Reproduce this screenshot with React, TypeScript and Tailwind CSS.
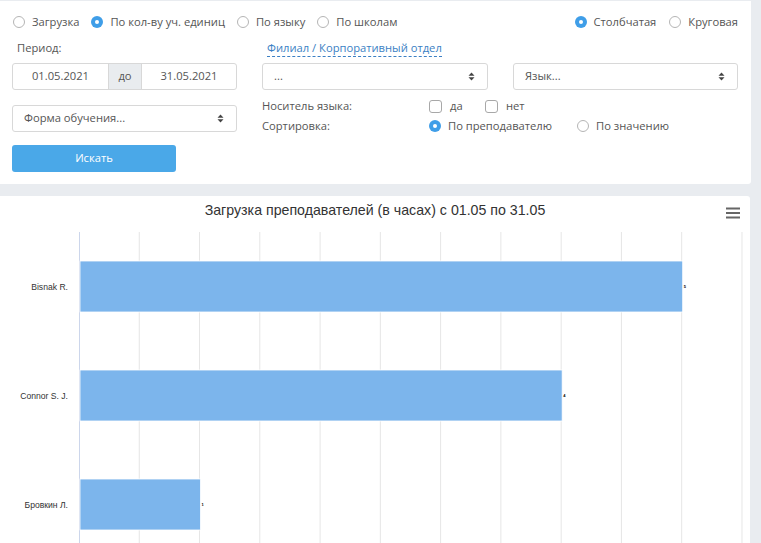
import React from "react";

const Radio = ({ checked, label }: { checked?: boolean; label: string }) => (
  <label className="flex items-center gap-[7px]">
    {checked ? (
      <span className="w-[12px] h-[12px] rounded-full bg-[#3f9ee8] flex items-center justify-center">
        <span className="w-[4px] h-[4px] rounded-full bg-white" />
      </span>
    ) : (
      <span className="w-[12px] h-[12px] rounded-full border border-[#b5b5b5] bg-white" />
    )}
    <span>{label}</span>
  </label>
);

const Check = ({ label }: { label: string }) => (
  <label className="flex items-center gap-[8px]">
    <span className="w-[13px] h-[13px] rounded-[3px] border border-[#a8a8a8] bg-white" />
    <span>{label}</span>
  </label>
);

const Arrows = () => (
  <svg width="7" height="9" viewBox="0 0 7 9">
    <path d="M3.5 0.5 L6.5 3.8 L0.5 3.8 Z" fill="#444" />
    <path d="M3.5 8.5 L6.5 5.2 L0.5 5.2 Z" fill="#444" />
  </svg>
);

const Select = ({ text, cls }: { text: string; cls?: string }) => (
  <div
    className={
      "flex items-center justify-between rounded-[3px] border border-[#d8d8d8] bg-white pl-[11px] pr-[12px] " +
      (cls || "")
    }
  >
    <span>{text}</span>
    <Arrows />
  </div>
);

export default function App() {
  const gridX = Array.from({ length: 12 }, (_, i) => 79 + i * 60.27);
  const unit = 2 * 60.27;
  const data = [
    { name: "Bisnak R.", v: 5 },
    { name: "Connor S. J.", v: 4 },
    { name: "Бровкин Л.", v: 1 },
  ];
  return (
    <div className="w-[761px] h-[543px] overflow-hidden bg-[#e9ecf0] pt-px">
      <div
        className="w-[751px] h-[183px] bg-white rounded-br-[3px] px-[12px] pt-[12px] text-[11.2px] text-[#555]"
        style={{ fontFamily: '"Open Sans", "Liberation Sans", sans-serif' }}
      >
        <div className="flex justify-between h-[18px] items-center pr-[1px]">
          <div className="flex items-center gap-[12px] pl-px">
            <Radio label="Загрузка" />
            <Radio checked label="По кол-ву уч. единиц" />
            <Radio label="По языку" />
            <Radio label="По школам" />
          </div>
          <div className="flex items-center gap-[13px]">
            <Radio checked label="Столбчатая" />
            <Radio label="Круговая" />
          </div>
        </div>
        <div className="grid grid-cols-[225px_226px_225px] gap-x-[25px] mt-[8px]">
          <div className="h-[18px] leading-[18px] pl-[5px]">Период:</div>
          <div className="h-[18px] leading-[18px] pl-[5px]">
            <span className="text-[#3b7fc4] border-b border-dashed border-[#3b7fc4] pb-px">
              Филиал / Корпоративный отдел
            </span>
          </div>
          <div />
          <div className="mt-[6px] h-[27px] flex rounded-[3px] border border-[#d8d8d8] overflow-hidden">
            <div className="w-[95px] flex items-center justify-center">01.05.2021</div>
            <div className="w-[34px] flex items-center justify-center bg-[#e9ecef] border-x border-[#d8d8d8]">
              до
            </div>
            <div className="flex-1 flex items-center justify-center">31.05.2021</div>
          </div>
          <Select text="..." cls="mt-[6px] h-[27px]" />
          <Select text="Язык..." cls="mt-[6px] h-[27px]" />
          <div className="h-[38px] mt-[8px] pt-[7px]">
            <Select text="Форма обучения..." cls="h-[27px]" />
          </div>
          <div className="col-span-2 h-[39px] mt-[7px]">
            <div className="flex items-center h-[19px]">
              <span className="w-[167px]">Носитель языка:</span>
              <div className="w-[56px]">
                <Check label="да" />
              </div>
              <Check label="нет" />
            </div>
            <div className="flex items-center h-[20px]">
              <span className="w-[167px]">Сортировка:</span>
              <div className="w-[148px]">
                <Radio checked label="По преподавателю" />
              </div>
              <Radio label="По значению" />
            </div>
          </div>
        </div>
        <button className="mt-[9px] w-[164px] h-[27px] rounded-[3px] bg-[#4aa8e8] text-white text-[11.2px]">
          Искать
        </button>
      </div>
      <div className="mt-[12px] w-[750px] h-[347px] bg-white rounded-tr-[3px]">
        <svg width="750" height="347" viewBox="0 0 750 347" style={{ fontFamily: '"Liberation Sans", Arial, sans-serif' }}>
          <text x="375" y="18.5" textAnchor="middle" fontSize="14.2" fill="#333">
            Загрузка преподавателей (в часах) с 01.05 по 31.05
          </text>
          <rect x="726" y="11.5" width="14" height="2" fill="#666" />
          <rect x="726" y="16" width="14" height="2" fill="#666" />
          <rect x="726" y="20.5" width="14" height="2" fill="#666" />
          {gridX.slice(1).map((x, i) => (
            <line key={i} x1={x} x2={x} y1={36} y2={347} stroke="#e6e6e6" strokeWidth="1" />
          ))}
          <line x1={79.5} x2={79.5} y1={36} y2={347} stroke="#ccd6eb" strokeWidth="1" />
          {data.map((d, i) => {
            const y = 65 + i * 109;
            const w = d.v * unit;
            return (
              <g key={d.name}>
                <rect x={80} y={y} width={w} height={51} fill="#7cb5ec" stroke="#fff" strokeWidth="0.8" />
                <text x={68} y={y + 28.5} textAnchor="end" fontSize="8.6" fill="#333">
                  {d.name}
                </text>
                <text x={81 + w} y={y + 27} fontSize="4" fontWeight="bold" fill="#000">
                  {d.v}
                </text>
              </g>
            );
          })}
        </svg>
      </div>
    </div>
  );
}
